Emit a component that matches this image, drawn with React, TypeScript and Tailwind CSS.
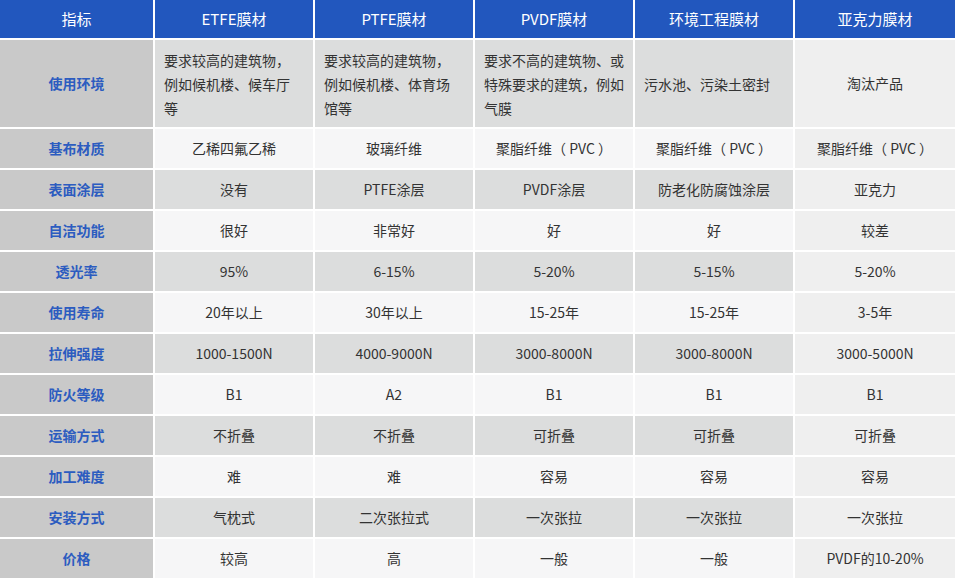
import React from "react";

const headers = ["指标", "ETFE膜材", "PTFE膜材", "PVDF膜材", "环境工程膜材", "亚克力膜材"];

type Row = { label: string; cells: string[] };

const rows: Row[] = [
  { label: "基布材质", cells: ["乙稀四氟乙稀", "玻璃纤维", "聚脂纤维（ PVC ）", "聚脂纤维（ PVC ）", "聚脂纤维（ PVC ）"] },
  { label: "表面涂层", cells: ["没有", "PTFE涂层", "PVDF涂层", "防老化防腐蚀涂层", "亚克力"] },
  { label: "自洁功能", cells: ["很好", "非常好", "好", "好", "较差"] },
  { label: "透光率", cells: ["95%", "6-15%", "5-20%", "5-15%", "5-20%"] },
  { label: "使用寿命", cells: ["20年以上", "30年以上", "15-25年", "15-25年", "3-5年"] },
  { label: "拉伸强度", cells: ["1000-1500N", "4000-9000N", "3000-8000N", "3000-8000N", "3000-5000N"] },
  { label: "防火等级", cells: ["B1", "A2", "B1", "B1", "B1"] },
  { label: "运输方式", cells: ["不折叠", "不折叠", "可折叠", "可折叠", "可折叠"] },
  { label: "加工难度", cells: ["难", "难", "容易", "容易", "容易"] },
  { label: "安装方式", cells: ["气枕式", "二次张拉式", "一次张拉", "一次张拉", "一次张拉"] },
  { label: "价格", cells: ["较高", "高", "一般", "一般", "PVDF的10-20%"] },
];

const firstRow: string[][] = [
  ["要求较高的建筑物，", "例如候机楼、候车厅", "等"],
  ["要求较高的建筑物，", "例如候机楼、体育场", "馆等"],
  ["要求不高的建筑物、或", "特殊要求的建筑，例如", "气膜"],
  ["污水池、污染土密封"],
];

const font = { fontFamily: '"Noto Sans CJK SC", "Noto Sans", sans-serif' };

export default function App() {
  return (
    <div className="w-[955px] h-[582px] bg-white overflow-hidden" style={font}>
      <div className="grid grid-cols-[153px_158px_158px_158px_158px_160px] gap-[2px] grid-rows-[38px_87px_repeat(11,39px)]">
        {headers.map((h) => (
          <div key={h} className="bg-[#2257be] text-white text-[15px] flex items-center justify-center">
            {h}
          </div>
        ))}

        <div className="bg-[#c9c9c9] text-[#2c5cc0] text-[14px] font-bold flex items-center justify-center">使用环境</div>
        {firstRow.map((lines, i) => (
          <div key={i} className="bg-[#dcdddd] text-[#333333] text-[14px] leading-[24px] flex flex-col justify-center px-[9px]">
            {lines.map((l) => (
              <div key={l} className="whitespace-nowrap">{l}</div>
            ))}
          </div>
        ))}
        <div className="bg-[#efefef] text-[#333333] text-[14px] flex items-center justify-center">淘汰产品</div>

        {rows.map((r, ri) => {
          const dark = ri % 2 === 1;
          return (
            <React.Fragment key={r.label}>
              <div className="bg-[#c9c9c9] text-[#2c5cc0] text-[14px] font-bold flex items-center justify-center">{r.label}</div>
              {r.cells.map((c, ci) => (
                <div
                  key={ci}
                  className={
                    "text-[#333333] text-[14px] flex items-center justify-center whitespace-pre " +
                    (ci === 4 ? "bg-[#efefef]" : dark ? "bg-[#dcdddd]" : "bg-[#f6f6f7]")
                  }
                >
                  {c}
                </div>
              ))}
            </React.Fragment>
          );
        })}
      </div>
    </div>
  );
}
